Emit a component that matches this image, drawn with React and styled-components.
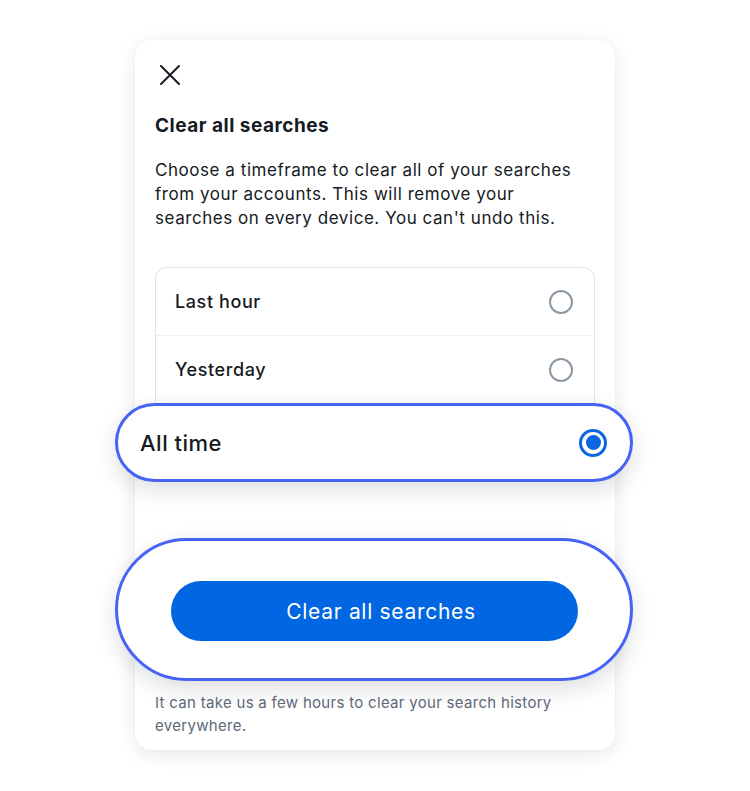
import styled, { createGlobalStyle } from "styled-components";

const GlobalStyle = createGlobalStyle`
    body {
        margin: 0;
        background-color: #ffffff;
        font-family: "Inter", "Noto Sans", sans-serif;
        color: #151a23;
    }
`;

const Page = styled.div`
    display: flex;
    justify-content: center;
    padding-top: 40px;
    height: 791px;
    box-sizing: border-box;
`;

const Card = styled.div`
    display: flex;
    flex-direction: column;
    width: 480px;
    height: 710px;
    box-sizing: border-box;
    padding: 24px 20px 13px;
    border-radius: 16px;
    background-color: white;
    box-shadow: 0 4px 18px rgba(20, 30, 50, 0.10), 0 0 2px rgba(20, 30, 50, 0.05);
`;

const CloseButton = styled.button`
    display: flex;
    align-items: center;
    justify-content: center;
    width: 22px;
    height: 22px;
    padding: 0;
    margin-left: 4px;
    border: none;
    background: none;
    cursor: pointer;
`;

const Title = styled.div`
    margin-top: 28px;
    font-size: 19px;
    line-height: 24px;
    font-weight: 650;
    letter-spacing: 0.5px;
`;

const Description = styled.div`
    margin-top: 20px;
    font-size: 17px;
    line-height: 24px;
    letter-spacing: 0.55px;
`;

const OptionList = styled.div`
    display: flex;
    flex-direction: column;
    margin-top: 37px;
    border: 1px solid #e1e5eb;
    border-bottom: none;
    border-radius: 12px 12px 0 0;
`;

const OptionRow = styled.div`
    display: flex;
    align-items: center;
    justify-content: space-between;
    height: 67px;
    padding: 0 21px 0 19px;
    font-size: 18px;
    font-weight: 500;
    letter-spacing: 0.6px;
    border-top: ${(props) => (props.first ? "none" : "1px solid #eef0f3")};
`;

const Radio = styled.div`
    width: 20px;
    height: 20px;
    border-radius: 50%;
    border: 2px solid #8c98a5;
`;

const HighlightPill = styled.div`
    display: flex;
    align-items: center;
    justify-content: space-between;
    height: 79px;
    box-sizing: border-box;
    margin: 0 -38px 0 -40px;
    padding: 0 23px 0 22px;
    border: 3px solid #4763f5;
    border-radius: 40px;
    background-color: white;
    box-shadow: 0 8px 22px rgba(20, 30, 50, 0.14);
    font-size: 22px;
    font-weight: 500;
    letter-spacing: 0.5px;
`;

const SelectedRadio = styled.div`
    display: flex;
    align-items: center;
    justify-content: center;
    width: 28px;
    height: 28px;
    box-sizing: border-box;
    border-radius: 50%;
    border: 3px solid #0b66e4;
`;

const RadioDot = styled.div`
    width: 15px;
    height: 15px;
    border-radius: 50%;
    background-color: #0b66e4;
`;

const ButtonPill = styled.div`
    display: flex;
    align-items: center;
    justify-content: center;
    height: 143px;
    box-sizing: border-box;
    margin: 56px -38px 0 -40px;
    border: 3px solid #4763f5;
    border-radius: 72px;
    background-color: white;
    box-shadow: 0 8px 22px rgba(20, 30, 50, 0.14);
`;

const PrimaryButton = styled.button`
    width: 407px;
    height: 60px;
    margin-top: 3px;
    padding: 0 0 0 14px;
    border: none;
    border-radius: 30px;
    background-color: #0066e1;
    color: white;
    font-family: "Inter", "Noto Sans", sans-serif;
    font-size: 21px;
    letter-spacing: 0.7px;
    cursor: pointer;
`;

const Footnote = styled.div`
    margin-top: 10px;
    font-size: 15px;
    line-height: 23px;
    letter-spacing: 0.3px;
    color: #5e6878;
`;

function CloseIcon() {
    return (
        <svg width="22" height="22" viewBox="0 0 22 22" fill="none">
            <path d="M2 2 L20 20 M20 2 L2 20" stroke="#151a23" strokeWidth="2" strokeLinecap="round" />
        </svg>
    );
}

export default function App() {
    return (
        <>
            <GlobalStyle />
            <Page>
                <Card>
                    <CloseButton aria-label="Close">
                        <CloseIcon />
                    </CloseButton>
                    <Title>Clear all searches</Title>
                    <Description>
                        Choose a timeframe to clear all of your searches from your accounts. This will remove your
                        searches on every device. You can't undo this.
                    </Description>
                    <OptionList>
                        <OptionRow first>
                            Last hour
                            <Radio />
                        </OptionRow>
                        <OptionRow>
                            Yesterday
                            <Radio />
                        </OptionRow>
                    </OptionList>
                    <HighlightPill>
                        All time
                        <SelectedRadio>
                            <RadioDot />
                        </SelectedRadio>
                    </HighlightPill>
                    <ButtonPill>
                        <PrimaryButton>Clear all searches</PrimaryButton>
                    </ButtonPill>
                    <Footnote>It can take us a few hours to clear your search history everywhere.</Footnote>
                </Card>
            </Page>
        </>
    );
}
